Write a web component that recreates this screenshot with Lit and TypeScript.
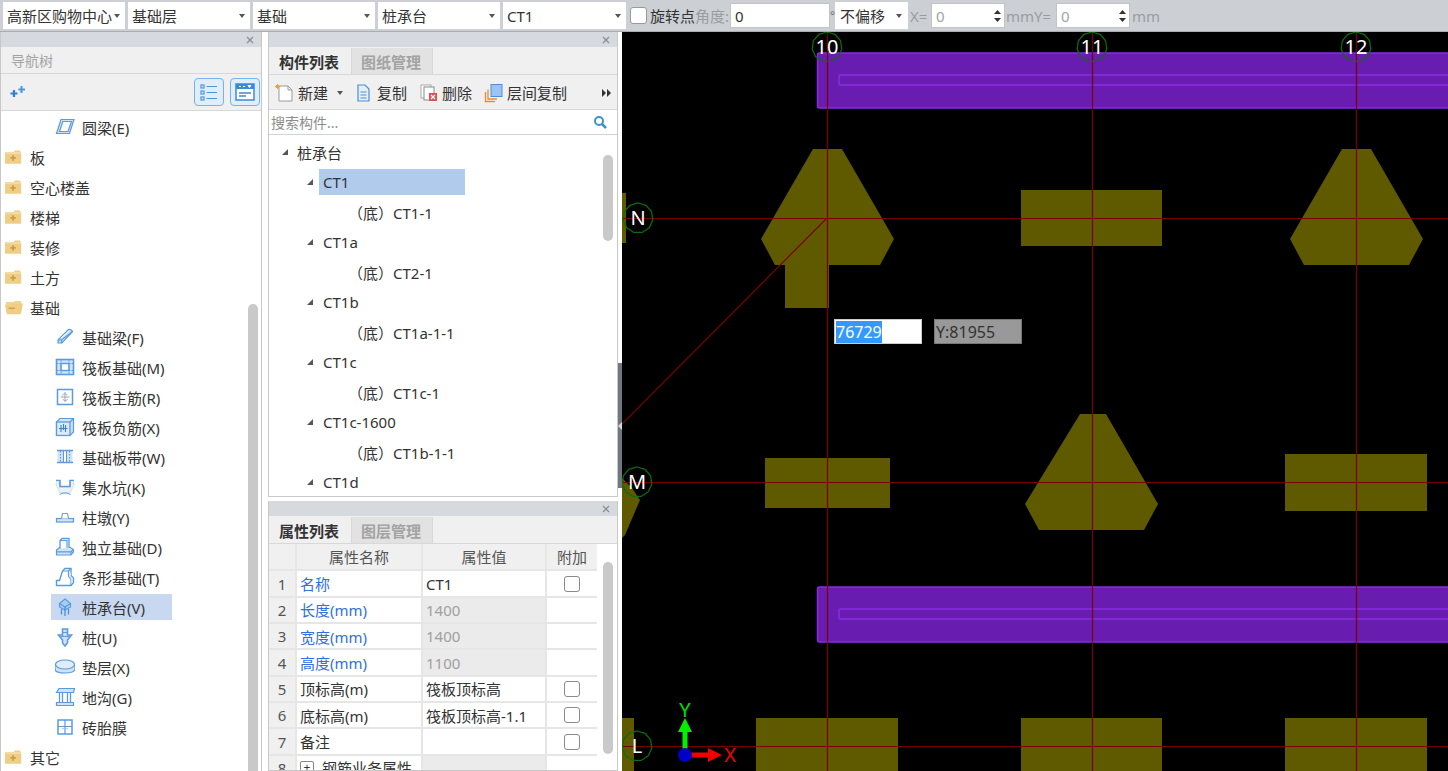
import { LitElement, html, svg, css } from "lit"
import { customElement } from "lit/decorators.js"

const BLUE = "#5a9bdc"
const PALE = "#cfe2f8"

const line = (d: string) => svg`<path d=${d} fill="none" stroke=${BLUE} stroke-width="1.2"/>`
const shape = (d: string) => svg`<path d=${d} fill=${PALE} stroke=${BLUE} stroke-width="1.2"/>`

// 构件 icons, all drawn in a 20x20 box
const icons: Record<string, unknown> = {
    ring: svg`${shape("M6 2.500H19L14.500 16.500H1.500Z")}<path d="M7.800 4.500H16.500L13 14.500H4.500Z" fill="#fff" stroke=${BLUE} stroke-width="1.200"/>`,
    beam: svg`${shape("M3 13L13.500 2.500C15 1.800 17 3 17.500 4.500L7 16H3Z")}${line("M3 13H6.500L17.500 4.500M6.500 13V16")}<path d="M6 11L14 4" stroke="#fff"/>`,
    raft: svg`<rect x="1.500" y="2.500" width="17" height="15" fill=${PALE} stroke=${BLUE} stroke-width="1.600"/>
        <rect x="6" y="6.500" width="8" height="7" fill="#fff" stroke=${BLUE} stroke-width="1.400"/>
        <path d="M1.500 6.500H18.500M1.500 13.500H18.500M6 2.500V17.500M14 2.500V17.500" fill="none" stroke=${BLUE} stroke-dasharray="2 1"/>`,
    main: svg`<rect x="2.500" y="2.500" width="15" height="15" fill="#fff" stroke=${BLUE} stroke-width="1.500"/>
        <path d="M10 5V15M5.500 10H14.500M7.500 8.500C7.500 6.500 12 6.500 12 8.500M8 12C8 14 12.500 14 12.500 12" fill="none" stroke="#9aa8b6"/>`,
    neg: svg`${shape("M1.500 5L5 1.500H18.500V15L15 18.500H1.500Z")}<rect x="1.500" y="5" width="13.500" height="13.500" fill="#dbe9f9" stroke=${BLUE} stroke-width="1.300"/>${line("M15 5L18.500 1.500")}
        <path d="M6 8V15M10.500 8V15M8.500 7V13M4 11.500H12.500" fill="none" stroke="#3f83ca" stroke-width="1.100"/>`,
    strip: svg`<rect x="2.500" y="3.500" width="15" height="12" fill=${PALE}/>
        <rect x="8.500" y="3.500" width="3" height="12" fill="#fff"/>
        <path d="M2 3.500H18M2 15.500H18" stroke=${BLUE} stroke-width="1.400"/>
        <path d="M8.500 3.500V15.500M11.500 3.500V15.500" stroke=${BLUE}/>
        <path d="M5.500 4V15M14.500 4V15" stroke=${BLUE} stroke-dasharray="1.500 1.500"/>`,
    pit: svg`<path d="M1 8L5 16H15L19 8V6H15V10H5V6H1Z" fill="#eef1f4" stroke="#c6ced6" stroke-dasharray="1.500 1"/>
        <path d="M1 3.500H5V9.500H15V3.500H19" fill="none" stroke=${BLUE} stroke-width="1.600"/>
        <path d="M4.500 17.500L8 16H12L15.500 17.500" fill="none" stroke=${BLUE}/>`,
    pier: svg`<rect x="1.500" y="11.500" width="17" height="3.500" fill=${PALE} stroke=${BLUE} stroke-width="1.200"/><path d="M6.500 11.500L7.500 6.500H12.500L13.500 11.500" fill="#fff" stroke="#8b9bac" stroke-width="1.200"/>`,
    isolated: svg`${shape("M1.500 13L4.500 10.500H15.500L18.500 12.500V15L16 18H1.500Z")}
        <path d="M5 11.500V3.500L7 1.500H14V10.500" fill="#fff" stroke=${BLUE} stroke-width="1.300"/>${line("M1.500 14.800H16L18.500 12.500M16 15V18M5 3.500H12V10.500")}`,
    stripBase: svg`<path d="M1.500 18.500V13.500H4.500L7.500 4L10 1.500H16V8.500L18.500 11V15.500L16 18.500Z" fill="#fff" stroke=${BLUE} stroke-width="1.400"/>
        <path d="M7.500 4H13.500V9.500L16 12V18.500M13.500 4L16 1.500" fill="none" stroke=${BLUE} stroke-width="1.200"/><path d="M14.500 6L16 5V9.500L18 11.500V15L16 17V12L14 9.500Z" fill=${PALE}/>`,
    cap: svg`<path d="M10 2L15.500 6.500V10L10 13L4.500 10V6.500Z" fill="#a9ccf3" stroke=${BLUE} stroke-width="1.200"/>
        ${line("M4.500 6.500L10 10L15.500 6.500")}<path d="M10 10V19M6.500 12V17.500M13.500 12V17.500" fill="none" stroke="#4a90dc" stroke-width="1.300"/>`,
    pile: svg`<path d="M7.500 2H12.500V8H16.500L12.500 13V16L10 19L7.500 16V13L3.500 8H7.500Z" fill=${PALE} stroke=${BLUE} stroke-width="1.600"/>${line("M7.500 5.500H12.500M6 9.500H14")}`,
    cushion: svg`<path d="M0 7.500V12C0 14.500 4.500 16 10 16S20 14.500 20 12V7.500Z" fill=${PALE} stroke=${BLUE} stroke-width="1.200"/>
        <ellipse cx="10" cy="7.500" rx="9.500" ry="4.500" fill="#dfecfa" stroke=${BLUE} stroke-width="1.200"/>`,
    trench: svg`${shape("M1.500 5.500H18.500L19.500 1.500H4Z")}<path d="M4.500 5.500V15M15.500 5.500V15M7.500 5.500V15M12.500 5.500V15" fill="none" stroke=${BLUE} stroke-width="1.300"/>
        ${shape("M1.500 15.500H18.500V18.500H1.500Z")}`,
    mould: svg`<rect x="3" y="3" width="14" height="14" fill="#fff" stroke=${BLUE} stroke-width="1.500"/>
        <path d="M10 3V17M3 9.500H17" stroke=${BLUE} stroke-width="1.200"/><path d="M8 11V12M12 11V12" stroke=${BLUE}/>`,
}

const folder = (open: boolean) => open
    ? html`<svg class="folder" viewBox="0 0 20 16"><path d="M1 2H9L11 .8H18V13H2Z" fill="#f3d48f"/><path d="M0 5H7L9 3.500H20L17.500 15.500H2Z" fill="#f0cd85"/><rect x="4" y="8" width="7" height="1.600" fill="#c99f4e"/></svg>`
    : html`<svg class="folder" viewBox="0 0 20 16"><path d="M0 2H9.500L11 .3H17V2H18V15H0Z" fill="#f0cd85"/><path d="M0 3H18" stroke="#fff3d8" stroke-width=".8"/><path d="M9 5.500V11.500M6 8.500H12" stroke="#c99f4e" stroke-width="2"/></svg>`

const navRows = [
    { label: "圆梁(E)", icon: "ring" },
    { label: "板", folder: "closed" },
    { label: "空心楼盖", folder: "closed" },
    { label: "楼梯", folder: "closed" },
    { label: "装修", folder: "closed" },
    { label: "土方", folder: "closed" },
    { label: "基础", folder: "open" },
    { label: "基础梁(F)", icon: "beam" },
    { label: "筏板基础(M)", icon: "raft" },
    { label: "筏板主筋(R)", icon: "main" },
    { label: "筏板负筋(X)", icon: "neg" },
    { label: "基础板带(W)", icon: "strip" },
    { label: "集水坑(K)", icon: "pit" },
    { label: "柱墩(Y)", icon: "pier" },
    { label: "独立基础(D)", icon: "isolated" },
    { label: "条形基础(T)", icon: "stripBase" },
    { label: "桩承台(V)", icon: "cap", selected: true },
    { label: "桩(U)", icon: "pile" },
    { label: "垫层(X)", icon: "cushion" },
    { label: "地沟(G)", icon: "trench" },
    { label: "砖胎膜", icon: "mould" },
    { label: "其它", folder: "closed" },
]

const parts = [
    ["CT1", "（底）CT1-1"],
    ["CT1a", "（底）CT2-1"],
    ["CT1b", "（底）CT1a-1-1"],
    ["CT1c", "（底）CT1c-1"],
    ["CT1c-1600", "（底）CT1b-1-1"],
    ["CT1d", ""],
]

const props = [
    { name: "名称", value: "CT1", link: true, check: true },
    { name: "长度(mm)", value: "1400", link: true, locked: true },
    { name: "宽度(mm)", value: "1400", link: true, locked: true },
    { name: "高度(mm)", value: "1100", link: true, locked: true },
    { name: "顶标高(m)", value: "筏板顶标高", check: true },
    { name: "底标高(m)", value: "筏板顶标高-1.1", check: true },
    { name: "备注", value: "", check: true },
]

const dropdowns = [
    ["高新区购物中心", "w1"],
    ["基础层", "w2"],
    ["基础", "w3"],
    ["桩承台", "w4"],
    ["CT1", "w5"],
]

const OLIVE = "#5f5a00"

const capShape = (dx: number) => svg`<polygon fill=${OLIVE} points="${813 + dx},149 ${842 + dx},149 ${894 + dx},239 ${880 + dx},265 ${775 + dx},265 ${761 + dx},239"/>`

const ring = (x: number, y: number) =>
    Array.from({ length: 11 }, (_, i) => {
        const a = (i / 11) * Math.PI * 2 - Math.PI / 2
        return `${(x + 15 * Math.cos(a)).toFixed(1)},${(y + 15 * Math.sin(a)).toFixed(1)}`
    }).join(" ")

const bubble = (x: number, y: number, label: string) => svg`
    <polygon points=${ring(x, y)} fill="none" stroke="#0a6e0a" stroke-width="1.200"/>
    <text x=${x} y=${y + 7} text-anchor="middle" class="bubble">${label}</text>`

const beam = (y: number) => svg`
    <rect x="817.500" y=${y} width="640" height="55" rx="2" fill="#681cb0" stroke="#8a2be2" stroke-width="1.500"/>
    <rect x="839" y=${y + 22} width="620" height="10" rx="1" fill="none" stroke="#8a2be2" stroke-width="1.500"/>`

@customElement("app-root")
export class AppRoot extends LitElement {
    static styles = css`
        :host {
            display: block;
            width: 1448px;
            height: 771px;
            overflow: hidden;
            background: #fff;
            color: #333;
            font: 15px "Noto Sans", "Noto Sans CJK SC", sans-serif;
        }
        svg { display: block; flex: none; }

        /* Top bar */
        .top {
            height: 31px;
            border-bottom: 1px solid #a9adb1;
            background: #ccd0d4;
            display: flex;
            align-items: center;
            padding-left: 3px;
        }
        .drop {
            height: 27px;
            background: #fff;
            display: flex;
            align-items: center;
            justify-content: space-between;
            padding: 0 5px 0 4px;
            box-sizing: border-box;
            white-space: nowrap;
            margin-right: 3px;
        }
        .w1, .w2, .w3, .w4 { width: 122px; }
        .w5 { width: 123px; margin-right: 4px; }
        .caret {
            width: 0;
            height: 0;
            border: 3.500px solid transparent;
            border-top: 4px solid #555;
            border-bottom: 0;
        }
        .box {
            width: 16px;
            height: 16px;
            border: 1px solid #8a8a8a;
            border-radius: 3px;
            background: #fff;
            box-sizing: border-box;
        }
        .top .box { width: 17px; height: 17px; margin-right: 3px; border-color: #999; }
        .label { white-space: nowrap; }
        .gray { color: #9a9da0; }
        .angle-label { width: 35px; }
        .x-label { width: 21px; margin-left: 2px; }
        .my-label { width: 50px; margin-left: 1px; }
        .mm-label { margin-left: 2px; }
        .field {
            height: 25px;
            background: #fff;
            border: 1px solid #c3c3c3;
            box-sizing: border-box;
            display: flex;
            align-items: center;
            justify-content: space-between;
            padding: 0 4px;
        }
        .angle { width: 100px; }
        .deg { width: 5px; color: #777; font-size: 12px; }
        .shift { width: 73px; height: 27px; border: 0; padding: 0 6px 0 5px; }
        .spin { width: 74px; padding-right: 2px; color: #a0a3a6; }

        /* Columns */
        .main { display: flex; height: 739px; }
        .nav {
            width: 260px;
            border-left: 1px solid #c8c8c8;
            border-right: 1px solid #c8c8c8;
            display: flex;
            flex-direction: column;
            overflow: hidden;
        }
        .mid {
            width: 350px;
            margin-left: 6px;
            display: flex;
            flex-direction: column;
            gap: 4px;
        }
        .handle {
            width: 4px;
            height: 125px;
            background: #6f7880;
            margin-top: 331px;
            display: flex;
            align-items: center;
        }
        .handle i {
            border: 4px solid transparent;
            border-right: 4px solid #d8d8d8;
            border-left: 0;
        }
        .canvas { flex: 1; background: #000; position: relative; overflow: hidden; }
        .canvas svg { width: 826px; height: 739px; }

        /* Panels */
        .strip {
            height: 15px;
            flex: none;
            background: #d6d9dd;
            display: flex;
            justify-content: flex-end;
            align-items: center;
            padding-right: 7px;
        }
        .panel {
            border: 1px solid #c8c8c8;
            border-top: 0;
            display: flex;
            flex-direction: column;
            overflow: hidden;
            box-sizing: border-box;
        }
        .top-panel { height: 465px; }
        .bottom-panel { flex: 1; }
        .title {
            height: 27px;
            flex: none;
            box-sizing: border-box;
            background: #f0f0f0;
            border-bottom: 1px solid #d8d8d8;
            padding: 0 0 1px 10px;
            display: flex;
            align-items: center;
            color: #a3a3a3;
            font-size: 14px;
        }
        .nav-tools {
            height: 37px;
            flex: none;
            background: #f0f0f0;
            border-bottom: 1px solid #d8d8d8;
            display: flex;
            align-items: center;
            padding: 0 1px 0 9px;
            gap: 6px;
            box-sizing: border-box;
        }
        .sparkle { margin-right: auto; }
        .toggle {
            width: 30px;
            height: 28px;
            box-sizing: border-box;
            background: #e0edfb;
            border: 1px solid #74b3ee;
            border-radius: 4px;
            display: flex;
            align-items: center;
            justify-content: center;
        }

        /* Navigation tree */
        .nav-body { position: relative; flex: 1; padding-top: 1px; overflow: hidden; }
        .nav-row {
            height: 30px;
            display: flex;
            align-items: center;
            padding-left: 4px;
            white-space: nowrap;
        }
        .nav-row.leaf { padding-left: 50px; }
        .folder { width: 18px; height: 15px; margin-right: 7px; }
        .leaf-inner {
            height: 26px;
            display: flex;
            align-items: center;
            gap: 7px;
            padding-left: 4px;
        }
        .leaf-inner.selected { background: #c7d8f0; width: 117px; }
        .leaf-inner svg { width: 20px; height: 20px; }
        .thumb {
            position: absolute;
            width: 10px;
            border-radius: 5px;
            background: #c9c9c9;
        }
        .nav-thumb { right: 3px; top: 193px; height: 480px; }
        .list-thumb { right: 4px; top: 20px; height: 86px; }
        .prop-thumb { right: 4px; top: 18px; height: 192px; }

        /* Tabs */
        .tabs {
            height: 28px;
            flex: none;
            background: #f0f0f0;
            border-bottom: 1px solid #d8d8d8;
            display: flex;
            align-items: stretch;
            box-sizing: border-box;
            padding-top: 1px;
        }
        .tab {
            width: 82px;
            box-sizing: border-box;
            padding-right: 2px;
            display: flex;
            align-items: center;
            justify-content: center;
            font-weight: 700;
        }
        .tab.off {
            background: #e2e2e2;
            color: #a3a3a3;
            border-left: 1px solid #d8d8d8;
            border-right: 1px solid #d8d8d8;
        }

        /* Part list */
        .tools {
            height: 35px;
            flex: none;
            background: #f0f0f0;
            border-bottom: 1px solid #d8d8d8;
            display: flex;
            align-items: center;
            padding: 1px 0 0 6px;
            box-sizing: border-box;
        }
        .tool { display: flex; align-items: center; gap: 3px; margin-right: 12px; white-space: nowrap; }
        .tool-new { margin-right: 11px; }
        .tool-new .caret { margin-left: 6px; }
        .more { margin-left: auto; margin-right: 6px; }
        .search {
            height: 24px;
            flex: none;
            border-bottom: 1px solid #d0d4d8;
            display: flex;
            align-items: center;
            justify-content: space-between;
            padding: 0 10px 0 2px;
            color: #8c8c8c;
            font-size: 14px;
        }
        .list { position: relative; flex: 1; padding-top: 2px; overflow: hidden; }
        .item { height: 30px; display: flex; align-items: center; white-space: nowrap; }
        .arrow {
            width: 0;
            height: 0;
            border-style: solid;
            border-width: 0 0 6px 6px;
            border-color: transparent transparent #555 transparent;
            margin-right: 9px;
            flex: none;
        }
        .root { padding-left: 13px; }
        .group { padding-left: 38px; }
        .group .arrow { margin-right: 10px; }
        .group span {
            height: 26px;
            line-height: 26px;
            width: 142px;
            padding-left: 4px;
            margin-left: -4px;
        }
        .group span.selected { background: #b1cbec; }
        .child { padding-left: 79px; }

        /* Property grid */
        .grid-wrap { position: relative; flex: 1; overflow: hidden; background: #fff; }
        .grid {
            display: grid;
            grid-template-columns: 26px 124px 122px 50px;
            grid-template-rows: 25.350px;
            grid-auto-rows: 24.350px;
            gap: 2px;
            width: 328px;
            background: #e6e6e6;
        }
        .cell {
            background: #fff;
            display: flex;
            align-items: center;
            padding-left: 3px;
            white-space: nowrap;
            overflow: hidden;
        }
        .head, .num { background: #f0f0f0; color: #555; justify-content: center; padding: 0; }
        .link { color: #2f6fe0; }
        .locked { background: #ebebeb; color: #a0a0a0; }
        .center { justify-content: center; padding: 0; }
        .plus {
            width: 14px;
            height: 14px;
            border: 1px solid #888;
            border-radius: 2px;
            box-sizing: border-box;
            margin-right: 8px;
            display: flex;
            align-items: center;
            justify-content: center;
            font-size: 12px;
            line-height: 1;
        }

        /* Canvas overlays */
        .bubble { fill: #fff; font-size: 20px; font-family: "Noto Sans", sans-serif; }
        .axis { font-size: 20px; font-family: "Noto Sans", sans-serif; }
        .coord {
            position: absolute;
            top: 287px;
            height: 25px;
            width: 88px;
            box-sizing: border-box;
            border: 1px solid #ccc;
            display: flex;
            align-items: center;
            padding-left: 1px;
            font-size: 16px;
        }
        .coord-x { left: 212px; background: #fff; }
        .coord-x span { background: #3399ff; color: #fff; }
        .coord-y { left: 312px; background: #999; border-color: #777; color: #333; }
    `

    private close() {
        return html`<svg width="8" height="8" viewBox="0 0 8 8"><path d="M1 1L7 7M7 1L1 7" stroke="#8a8f94" stroke-width="1.300"/></svg>`
    }

    private spinner() {
        return html`<svg width="9" height="18" viewBox="0 0 9 18"><path d="M4.500 3L8 7H1ZM4.500 15L1 11H8Z" fill="#333"/></svg>`
    }

    private renderTop() {
        return html`<div class="top">
            ${dropdowns.map(([label, cls]) => html`<div class="drop ${cls}">${label}<i class="caret"></i></div>`)}
            <div class="box"></div>
            <span class="label">旋转点</span><span class="label gray angle-label">角度:</span>
            <div class="field angle">0</div>
            <span class="deg">°</span>
            <div class="field shift">不偏移<i class="caret"></i></div>
            <span class="label gray x-label">X=</span>
            <div class="field spin">0${this.spinner()}</div>
            <span class="label gray my-label">mmY=</span>
            <div class="field spin">0${this.spinner()}</div>
            <span class="label gray mm-label">mm</span>
        </div>`
    }

    private renderNav() {
        return html`<div class="nav">
            <div class="strip">${this.close()}</div>
            <div class="title">导航树</div>
            <div class="nav-tools">
                <svg class="sparkle" width="16" height="14" viewBox="0 0 16 14"><path d="M4 5V12M.5 8.500H7.500" stroke="#2f80d0" stroke-width="2.200"/><path d="M11.500 1V8M8.500 4.500H15" stroke="#4a95dd" stroke-width="2"/></svg>
                <div class="toggle"><svg width="20" height="20" viewBox="0 0 20 20"><g fill="none" stroke="#4a95dd" stroke-width="1.200"><rect x="2" y="3" width="3" height="3"/><rect x="2" y="9" width="3" height="3"/><rect x="2" y="15" width="3" height="3"/><path d="M7.500 4.500H18M7.500 10.500H18M7.500 16.500H18"/></g></svg></div>
                <div class="toggle"><svg width="22" height="20" viewBox="0 0 22 20"><rect x="2" y="2" width="18" height="16" fill="#fff" stroke="#3a8ad8" stroke-width="1.500"/><rect x="2" y="2" width="18" height="5" fill="#3a8ad8"/><path d="M5 11H17M5 14H12" stroke="#3a8ad8" stroke-width="1.300"/><path d="M5 4.500H7M9 4.500H11M14 3.500L17 3.500L15.500 5.500Z" stroke="#fff" fill="#fff"/></svg></div>
            </div>
            <div class="nav-body">
                ${navRows.map((row) => row.folder
                    ? html`<div class="nav-row">${folder(row.folder === "open")}${row.label}</div>`
                    : html`<div class="nav-row leaf"><div class="leaf-inner ${row.selected ? "selected" : ""}"><svg viewBox="0 0 20 20">${icons[row.icon as string]}</svg>${row.label}</div></div>`)}
                <div class="thumb nav-thumb"></div>
            </div>
        </div>`
    }

    private renderParts() {
        return html`<div class="panel top-panel">
            <div class="strip">${this.close()}</div>
            <div class="tabs"><div class="tab">构件列表</div><div class="tab off">图纸管理</div></div>
            <div class="tools">
                <div class="tool tool-new"><svg width="20" height="20" viewBox="0 0 20 20"><path d="M4 3H13L17 7V18H4Z" fill="#fff" stroke="#999"/><path d="M13 3V7H17" fill="none" stroke="#999"/><path d="M2.500 1V6M0 3.500H5M1 2L4 5M4 2L1 5" stroke="#f0a030"/></svg>新建<i class="caret"></i></div>
                <div class="tool"><svg width="20" height="20" viewBox="0 0 20 20"><path d="M4 2H11L15 6V18H4Z" fill="#e4effb" stroke="#4a8fd8" stroke-width="1.200"/><path d="M6.500 9H12.500M6.500 12H12.500M6.500 15H12.500" stroke="#4a8fd8"/></svg>复制</div>
                <div class="tool"><svg width="20" height="20" viewBox="0 0 20 20"><rect x="2" y="2" width="10" height="13" fill="#fff" stroke="#aaa"/><rect x="5" y="4" width="10" height="13" fill="#fff" stroke="#888"/><rect x="10" y="10" width="8" height="8" fill="#e05050"/><path d="M12 12L16 16M16 12L12 16" stroke="#fff" stroke-width="1.200"/></svg>删除</div>
                <div class="tool"><svg width="20" height="20" viewBox="0 0 20 20"><path d="M1.500 9V18.500H11M4 6.500V16H13" fill="none" stroke="#ee8a33" stroke-width="1.300"/><rect x="7" y="1.500" width="11" height="12" fill="#9cc4f2" stroke="#4a8fd8"/></svg>层间复制</div>
                <svg class="more" width="9" height="8" viewBox="0 0 9 8"><path d="M0 0L4 4L0 8ZM5 0L9 4L5 8Z" fill="#333"/></svg>
            </div>
            <div class="search">搜索构件...
                <svg width="14" height="14" viewBox="0 0 14 14"><circle cx="6" cy="6" r="4" fill="none" stroke="#3a93c8" stroke-width="2"/><path d="M9 9L13 13" stroke="#3a93c8" stroke-width="2.500"/></svg>
            </div>
            <div class="list">
                <div class="item root"><i class="arrow"></i>桩承台</div>
                ${parts.map(([name, child], i) => html`
                    <div class="item group"><i class="arrow"></i><span class=${i === 0 ? "selected" : ""}>${name}</span></div>
                    ${child ? html`<div class="item child">${child}</div>` : ""}`)}
                <div class="thumb list-thumb"></div>
            </div>
        </div>`
    }

    private renderProps() {
        return html`<div class="panel bottom-panel">
            <div class="strip">${this.close()}</div>
            <div class="tabs"><div class="tab">属性列表</div><div class="tab off">图层管理</div></div>
            <div class="grid-wrap">
                <div class="grid">
                    <div class="cell head"></div><div class="cell head">属性名称</div><div class="cell head">属性值</div><div class="cell head">附加</div>
                    ${props.map((p, i) => html`
                        <div class="cell num">${i + 1}</div>
                        <div class="cell ${p.link ? "link" : ""}">${p.name}</div>
                        <div class="cell ${p.locked ? "locked" : ""}">${p.value}</div>
                        <div class="cell center">${p.check ? html`<div class="box"></div>` : ""}</div>`)}
                    <div class="cell num">8</div>
                    <div class="cell"><span class="plus">+</span>钢筋业务属性</div>
                    <div class="cell locked"></div>
                    <div class="cell"></div>
                </div>
                <div class="thumb prop-thumb"></div>
            </div>
        </div>`
    }

    private renderCanvas() {
        return html`<div class="canvas">
            <svg viewBox="622 32 826 739">
                ${beam(53)}${beam(587)}
                ${capShape(0)}${capShape(529)}
                <rect x="785" y="265" width="44" height="43" fill=${OLIVE}/>
                <rect x="1021" y="190" width="141" height="56" fill=${OLIVE}/>
                <rect x="622" y="193" width="4" height="50" fill=${OLIVE}/>
                <rect x="765" y="458" width="125" height="50" fill=${OLIVE}/>
                <polygon fill=${OLIVE} points="1080,414 1106,414 1158,504 1144,530 1039,530 1025,504"/>
                <rect x="1285" y="454" width="142" height="57" fill=${OLIVE}/>
                <polygon fill=${OLIVE} points="622,478 632,488 640,500 625,535 622,538"/>
                <rect x="622" y="718" width="12" height="53" fill=${OLIVE}/>
                <rect x="756" y="718" width="142" height="53" fill=${OLIVE}/>
                <rect x="1021" y="718" width="141" height="53" fill=${OLIVE}/>
                <rect x="1285" y="718" width="142" height="53" fill=${OLIVE}/>
                <path d="M827.500 32V771M1092.500 32V771M1356.500 32V771M622 218.500H1448M622 482.500H1448M622 746.500H1448M827 218L622 424" fill="none" stroke="#7a0000" stroke-width="1.200"/>
                ${bubble(827, 47, "10")}${bubble(1092, 47, "11")}${bubble(1356, 47, "12")}
                ${bubble(638, 218, "N")}${bubble(637, 482, "M")}${bubble(637, 746, "L")}
                <path d="M685 718L692 732H687.500V755H682.500V732H678Z" fill="#00f000"/>
                <path d="M722 755L708 762V757.500H685V752.500H708V748Z" fill="#f00000"/>
                <circle cx="685" cy="755" r="7" fill="#0000c8"/>
                <text x="685" y="717" text-anchor="middle" class="axis" fill="#00e000">Y</text>
                <text x="730" y="762" text-anchor="middle" class="axis" fill="#f00000">X</text>
            </svg>
            <div class="coord coord-x"><span>76729</span></div>
            <div class="coord coord-y">Y:81955</div>
        </div>`
    }

    render() {
        return html`
            ${this.renderTop()}
            <div class="main">
                ${this.renderNav()}
                <div class="mid">${this.renderParts()}${this.renderProps()}</div>
                <div class="handle"><i></i></div>
                ${this.renderCanvas()}
            </div>`
    }
}
